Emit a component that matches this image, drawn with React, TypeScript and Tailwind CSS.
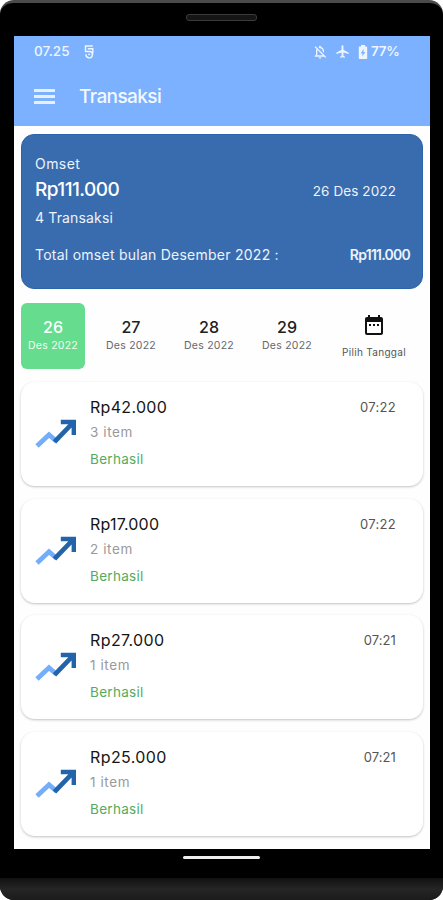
import { MdAirplanemodeActive, MdDateRange, MdOutlineNotificationsOff } from 'react-icons/md';

const days = [
  { day: '26', active: true },
  { day: '27', active: false },
  { day: '28', active: false },
  { day: '29', active: false },
];

const transactions = [
  { amount: 'Rp42.000', items: '3 item', time: '07:22', width: 'tracking-[0.3px]', timeWidth: 'tracking-[0.3px]' },
  { amount: 'Rp17.000', items: '2 item', time: '07:22', width: 'tracking-[0.2px]', timeWidth: 'tracking-[0.3px]' },
  { amount: 'Rp27.000', items: '1 item', time: '07:21', width: 'tracking-[0.4px]', timeWidth: 'tracking-[0.1px]' },
  { amount: 'Rp25.000', items: '1 item', time: '07:21', width: 'tracking-[0.4px]', timeWidth: 'tracking-[0.1px]' },
];

function TrendIcon() {
  return (
    <svg viewBox="0 0 42 30" className="h-[30px] w-[42px]" fill="none">
      <path d="M2 27L14 15.800L21.500 22.300" stroke="#74adfa" strokeWidth="4.800" />
      <path d="M17.800 21.200L33.300 5.300H25.800V.8H41V16H36.600V8.600L21.200 24.600z" fill="#2263aa" />
    </svg>
  );
}

function StatusBar() {
  return (
    <div className="flex h-[31px] items-center pl-[20px] pr-[30px] text-[#eef5ff]">
      <span className="w-[37px] whitespace-nowrap text-[13.5px] font-medium tracking-[0.1px]">07.25</span>
      <svg viewBox="0 0 12 16" className="ml-[12px] h-4 w-3" fill="none" stroke="currentColor" strokeWidth="1.4">
        <path d="M9.800 2H2.500v5.500h5a3.300 3.300 0 1 1-4.600 2.800M4.800 4.800h5v4.400" />
        <path d="M5.200 10.400h2" />
      </svg>
      <div className="ml-auto flex items-center">
        <MdOutlineNotificationsOff size={16} />
        <MdAirplanemodeActive size={15} className="ml-[7px]" />
        <svg viewBox="0 0 10 14" className="ml-[8px] h-[14px] w-[10px]" fill="currentColor">
          <path
            fillRule="evenodd"
            d="M3 0h4v1.500h1.200c.6 0 1 .4 1 1v10.500c0 .6-.4 1-1 1H1.800c-.6 0-1-.4-1-1V2.500c0-.6.4-1 1-1H3zM5.500 3.800L2.800 8.400h1.600v3.200l2.800-4.600H5.500z"
          />
        </svg>
        <span className="ml-[3px] w-[29px] whitespace-nowrap text-[13.5px] font-semibold tracking-[-0.3px]">77%</span>
      </div>
    </div>
  );
}

function Header() {
  return (
    <header className="h-[90px] shrink-0 bg-[#7bb1ff]">
      <StatusBar />
      <div className="flex h-[58px] items-center pl-5">
        <div className="flex w-[21px] flex-col gap-[3px]">
          <span className="h-[3px] bg-[#e6f0ff]" />
          <span className="h-[3px] bg-[#e6f0ff]" />
          <span className="h-[3px] bg-[#e6f0ff]" />
        </div>
        <h1 className="ml-6 pt-[2px] text-[19px] font-medium tracking-[-0.6px] text-[#f4f8ff]">Transaksi</h1>
      </div>
    </header>
  );
}

function SummaryCard() {
  return (
    <section className="mt-2 h-[155px] rounded-[13px] border border-[#2a64aa] bg-[#396cae] pl-[13px] pr-[12px] pt-[19px] text-[#edf3fc]">
      <p className="text-[14px] leading-5 tracking-[0.45px]">Omset</p>
      <div className="mt-[3px] flex h-6 items-center justify-between pr-[14px]">
        <span className="pt-[2px] text-[19px] font-medium tracking-[-0.55px] text-white">Rp111.000</span>
        <span className="pt-[5px] text-[13.5px] tracking-[0.1px]">26 Des 2022</span>
      </div>
      <p className="mt-[7px] text-[14px] leading-5 tracking-[0.15px]">4 Transaksi</p>
      <div className="mt-[17px] flex justify-between text-[14px] leading-5">
        <span className="tracking-[0.25px]">Total omset bulan Desember 2022 :</span>
        <span className="font-semibold tracking-[-0.75px]">Rp111.000</span>
      </div>
    </section>
  );
}

function DatePicker() {
  return (
    <section className="mt-[14px] flex h-[66px] shrink-0 gap-[14px]">
      {days.map(({ day, active }) => (
        <button
          key={day}
          className={`flex w-16 flex-col items-center rounded-[6px] pt-[13px] ${
            active ? 'bg-[#66dc8e] text-white' : 'text-[#202020]'
          }`}
        >
          <span className="text-[16px] font-medium leading-[22px]">{day}</span>
          <span
            className={`whitespace-nowrap pt-px text-[10.5px] leading-[14px] tracking-[0.25px] ${
              active ? 'text-[#f0fff4]' : 'text-[#666]'
            }`}
          >
            Des 2022
          </span>
        </button>
      ))}
      <button className="flex w-[82px] flex-col items-center pt-[10px] text-[#111]">
        <MdDateRange size={24} />
        <span className="mt-[8px] whitespace-nowrap text-[10px] leading-[14px] tracking-[0.3px] text-[#555]">
          Pilih Tanggal
        </span>
      </button>
    </section>
  );
}

export default function App() {
  return (
    <div className="h-[900px] w-[443px] overflow-hidden bg-white font-['Inter','Liberation_Sans',sans-serif]">
      <div className="flex h-[900px] flex-col rounded-[14px] border-t-[3px] border-[#4a4a4a] bg-black">
        <div className="flex h-[33px] shrink-0 justify-center pt-[11px]">
          <span className="h-[7px] w-[71px] rounded-[3px] border border-[#3b3b3b] bg-[#151515]" />
        </div>

        <main className="ml-[14px] flex h-[813px] w-[416px] shrink-0 flex-col bg-[#fefefe]">
          <Header />
          <div className="flex flex-col pl-[7px] pr-[7px]">
            <SummaryCard />
            <DatePicker />
            <div className="mt-[13px] flex flex-col gap-[12.7px]">
              {transactions.map((t) => (
                <article
                  key={t.amount}
                  className="flex h-[104px] rounded-[14px] bg-white pl-[14px] pr-[27px] shadow-[0_1px_2.5px_rgba(0,0,0,0.24)]"
                >
                  <div className="pt-[37px]">
                    <TrendIcon />
                  </div>
                  <div className="ml-[13px] flex flex-1 flex-col pt-[13px]">
                    <span className={`text-[16px] leading-6 text-[#151515] ${t.width}`}>{t.amount}</span>
                    <span className="mt-[3px] text-[13.5px] leading-5 tracking-[0.6px] text-[#999]">{t.items}</span>
                    <span className="mt-[7px] text-[13.5px] leading-5 tracking-[0.3px] text-[#55ab5c]">Berhasil</span>
                  </div>
                  <span className={`pt-[15px] text-[13px] leading-5 text-[#555] ${t.timeWidth}`}>{t.time}</span>
                </article>
              ))}
            </div>
          </div>
        </main>

        <div className="flex h-[29px] shrink-0 justify-center pt-[7px]">
          <span className="h-[3px] w-[77px] rounded-full bg-[#eee]" />
        </div>
        <div className="flex-1 rounded-b-[14px] bg-linear-to-b from-[#111] via-[#252525] to-[#1b1b1b]" />
      </div>
    </div>
  );
}
